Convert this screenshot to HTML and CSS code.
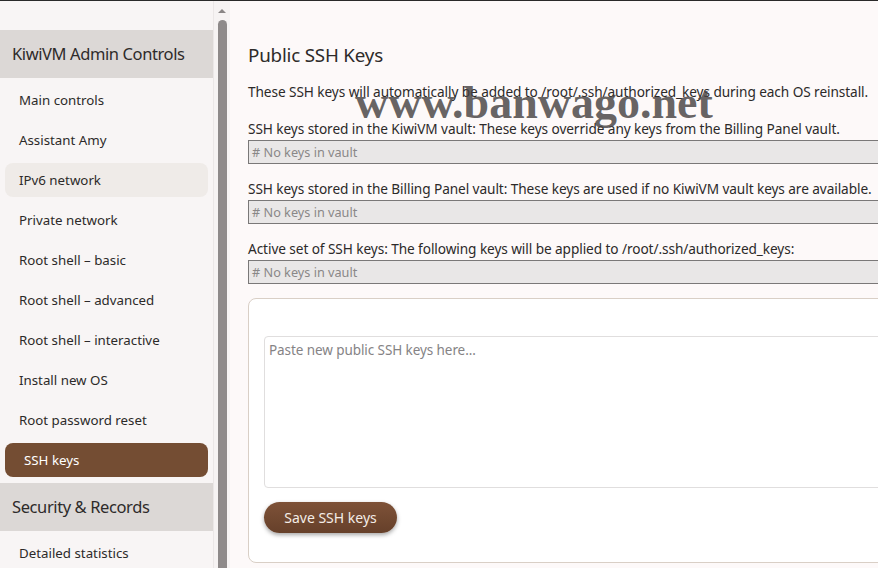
FILE: index.html
```html
<!DOCTYPE html>
<html>
<head>
<meta charset="utf-8">
<link rel="stylesheet" href="styles.css">
</head>
<body>
<div class="app">
  <aside class="sidebar">
    <div class="group-title">KiwiVM Admin Controls</div>
    <nav class="menu">
      <a class="item">Main controls</a>
      <a class="item">Assistant Amy</a>
      <a class="item hover">IPv6 network</a>
      <a class="item">Private network</a>
      <a class="item">Root shell – basic</a>
      <a class="item">Root shell – advanced</a>
      <a class="item">Root shell – interactive</a>
      <a class="item">Install new OS</a>
      <a class="item">Root password reset</a>
      <a class="item active">SSH keys</a>
    </nav>
    <div class="group-title">Security &amp; Records</div>
    <nav class="menu">
      <a class="item">Detailed statistics</a>
    </nav>
  </aside>
  <div class="scrollbar">
    <div class="arrow"></div>
    <div class="thumb"></div>
  </div>
  <main class="main">
    <h1 class="title">Public SSH Keys</h1>
    <p class="intro">These SSH keys will automatically be added to /root/.ssh/authorized_keys during each OS reinstall.</p>
    <label class="label first">SSH keys stored in the KiwiVM vault: These keys override any keys from the Billing Panel vault.</label>
    <div class="vault">#&nbsp;No keys in vault</div>
    <label class="label">SSH keys stored in the Billing Panel vault: These keys are used if no KiwiVM vault keys are available.</label>
    <div class="vault">#&nbsp;No keys in vault</div>
    <label class="label">Active set of SSH keys: The following keys will be applied to /root/.ssh/authorized_keys:</label>
    <div class="vault">#&nbsp;No keys in vault</div>
    <section class="card">
      <textarea class="keys" placeholder="Paste new public SSH keys here..."></textarea>
      <button class="save">Save SSH keys</button>
    </section>
  </main>
</div>
<div class="watermark">www.banwago.net</div>
</body>
</html>
```
FILE: styles.css
```css
* { box-sizing: border-box; }
html, body { margin: 0; padding: 0; }
body {
  width: 878px;
  height: 568px;
  overflow: hidden;
  font-family: "Noto Sans", "Open Sans", sans-serif;
  color: #2c2a29;
  background: #fdf9f9;
  border-top: 1px solid #2a2a2a;
  position: relative;
}
.app {
  display: flex;
  height: 567px;
}
.sidebar {
  width: 214px;
  flex: none;
  background: #f8f5f5;
  border-right: 1px solid #ebe7e7;
  padding-top: 29px;
}
.group-title {
  height: 48px;
  background: #dcd8d6;
  padding-left: 12px;
  font-size: 16.5px;
  letter-spacing: -0.4px;
  line-height: 48px;
  color: #2e2b2a;
  white-space: nowrap;
}
.menu {
  display: flex;
  flex-direction: column;
  gap: 6px;
  padding: 5px 5px 6px 5px;
}
.item {
  display: block;
  height: 34px;
  line-height: 34px;
  padding-left: 14px;
  border-radius: 8px;
  font-size: 13.3px;
  color: #2c2a29;
  white-space: nowrap;
}
.item.hover { background: #efebe8; }
.item.active {
  background: #744d33;
  color: #fff;
  padding-left: 19px;
}
.scrollbar {
  width: 16px;
  flex: none;
  background: #f6f3f3;
  display: flex;
  flex-direction: column;
  align-items: center;
  padding-top: 8px;
}
.arrow {
  width: 0;
  height: 0;
  border-left: 4px solid transparent;
  border-right: 4px solid transparent;
  border-bottom: 4px solid #8a8686;
}
.thumb {
  margin-top: 7px;
  width: 9px;
  flex: 1;
  background: #8e8a8a;
  border-radius: 5px 5px 0 0;
}
.main {
  flex: none;
  width: 760px;
  padding: 42px 0 0 18px;
  background: #fdf9f9;
}
.title {
  margin: 0;
  font-size: 18.8px;
  letter-spacing: -0.2px;
  line-height: 24px;
  font-weight: 400;
  color: #2e2b2a;
}
.intro {
  margin: 15px 0 0;
  font-size: 13.65px;
  letter-spacing: -0.08px;
  line-height: 20px;
  white-space: nowrap;
}
.label {
  display: block;
  margin-top: 15px;
  font-size: 13.65px;
  letter-spacing: -0.08px;
  line-height: 20px;
  white-space: nowrap;
}
.label.first { margin-top: 17px; }
.vault {
  margin-top: 1px;
  height: 24px;
  width: 700px;
  background: #e9e7e7;
  border: 1px solid #7a7878;
  border-right: none;
  padding-left: 3px;
  font-size: 12.7px;
  line-height: 22px;
  color: #8a8888;
}
.card {
  margin-top: 14px;
  width: 700px;
  height: 265px;
  background: #fff;
  border: 1px solid #d9cfc6;
  border-radius: 8px;
  padding: 37px 0 0 15px;
}
.keys {
  display: block;
  width: 700px;
  height: 152px;
  border: 1px solid #e0dede;
  border-radius: 4px;
  padding: 3px 4px;
  font-family: "Noto Sans", "Open Sans", sans-serif;
  font-size: 13.5px;
  letter-spacing: -0.08px;
  line-height: 20px;
  resize: none;
  background: #fff;
}
.keys::placeholder { color: #858385; }
.save {
  margin-top: 14px;
  width: 133px;
  height: 31px;
  border: none;
  border-radius: 16px;
  background: linear-gradient(#7e5238, #66402a);
  color: #f4ede7;
  font-family: "Noto Sans", "Open Sans", sans-serif;
  font-size: 14px;
  box-shadow: 0 2px 4px rgba(0,0,0,0.35);
}
.watermark {
  position: absolute;
  left: 355px;
  top: 74px;
  font-family: "Liberation Serif", serif;
  font-weight: 700;
  font-size: 46px;
  line-height: 56px;
  color: rgba(70, 66, 66, 0.82);
  white-space: nowrap;
  pointer-events: none;
}
```
